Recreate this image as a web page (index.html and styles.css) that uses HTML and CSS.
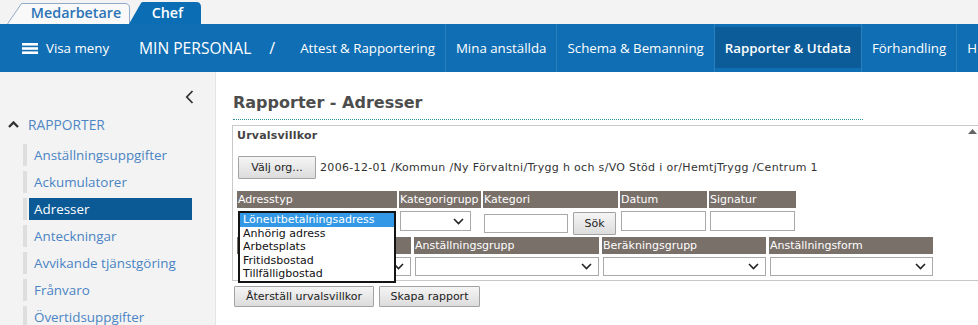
FILE: index.html
```html
<!DOCTYPE html>
<html lang="sv">
<head>
<meta charset="utf-8">
<title>Rapporter - Adresser</title>
<link rel="stylesheet" href="styles.css">
</head>
<body>
<div class="tabs">
  <div class="tab tab-emp">
    <svg class="tab-bg" width="124" height="22" viewBox="0 0 124 22"><path d="M0.5 22 L14.5 1.5 L118 1.5 Q122.5 1.5 122.5 6 L122.5 22" fill="#f9f9f9" stroke="#8fabc8" stroke-width="1"/></svg>
    <span class="tab-label">Medarbetare</span>
  </div>
  <div class="tab tab-chef">
    <svg class="tab-bg" width="72" height="22" viewBox="0 0 72 22"><path d="M0 22 L12 1 Q12.6 0 14 0 L67 0 Q72 0 72 5 L72 22 Z" fill="#0b6db3"/></svg>
    <span class="tab-label">Chef</span>
  </div>
</div>

<nav class="nav">
  <div class="nav-menu">
    <svg width="16" height="11" viewBox="0 0 16 11"><rect x="0" y="0" width="16" height="2.6" fill="#fff"/><rect x="0" y="4.2" width="16" height="2.6" fill="#fff"/><rect x="0" y="8.4" width="16" height="2.6" fill="#fff"/></svg>
    <span>Visa meny</span>
  </div>
  <div class="nav-title">MIN PERSONAL</div>
  <div class="nav-slash">/</div>
  <ul class="nav-items">
    <li><a>Attest &amp; Rapportering</a></li>
    <li><a>Mina anställda</a></li>
    <li><a>Schema &amp; Bemanning</a></li>
    <li class="active"><a>Rapporter &amp; Utdata</a></li>
    <li><a>Förhandling</a></li>
    <li><a>H</a></li>
  </ul>
</nav>

<div class="layout">
  <aside class="sidebar">
    <div class="collapse">
      <svg width="9" height="14" viewBox="0 0 9 14"><path d="M7.5 1 L1.8 7 L7.5 13" fill="none" stroke="#333" stroke-width="1.8"/></svg>
    </div>
    <div class="section">
      <svg width="11" height="7" viewBox="0 0 11 7"><path d="M1 6 L5.5 1.5 L10 6" fill="none" stroke="#333" stroke-width="2.4"/></svg>
      <span>RAPPORTER</span>
    </div>
    <ul class="side-list">
      <li><a>Anställningsuppgifter</a></li>
      <li><a>Ackumulatorer</a></li>
      <li class="active"><a>Adresser</a></li>
      <li><a>Anteckningar</a></li>
      <li><a>Avvikande tjänstgöring</a></li>
      <li><a>Frånvaro</a></li>
      <li><a>Övertidsuppgifter</a></li>
    </ul>
  </aside>

  <main class="main">
    <h1 class="title">Rapporter - Adresser</h1>
    <section class="panel">
      <div class="panel-head">
        <span>Urvalsvillkor</span>
        <svg width="9" height="5" viewBox="0 0 9 5"><path d="M0 5 L4.5 0 L9 5 Z" fill="#666"/></svg>
      </div>
      <div class="org-row">
        <button class="btn btn-org">Välj org...</button>
        <span class="org-text">2006-12-01 /Kommun /Ny Förvaltni/Trygg h och s/VO Stöd i or/HemtjTrygg /Centrum 1</span>
      </div>

      <div class="grid grid-1">
        <div class="hd">Adresstyp</div>
        <div class="hd">Kategorigrupp</div>
        <div class="hd">Kategori</div>
        <div class="hd">Datum</div>
        <div class="hd">Signatur</div>

        <div class="cell cell-dd">
          <div class="select sel-adress"><span></span><svg width="11" height="7" viewBox="0 0 11 7"><path d="M1 1 L5.5 5.5 L10 1" fill="none" stroke="#222" stroke-width="1.6"/></svg></div>
          <ul class="listbox">
            <li class="sel">Löneutbetalningsadress</li>
            <li>Anhörig adress</li>
            <li>Arbetsplats</li>
            <li>Fritidsbostad</li>
            <li>Tillfälligbostad</li>
          </ul>
        </div>
        <div class="cell">
          <div class="select sel-kat"><span></span><svg width="11" height="7" viewBox="0 0 11 7"><path d="M1 1 L5.5 5.5 L10 1" fill="none" stroke="#222" stroke-width="1.6"/></svg></div>
        </div>
        <div class="cell cell-kategori">
          <div class="input in-kat"></div>
          <button class="btn btn-sok">Sök</button>
        </div>
        <div class="cell"><div class="input in-date"></div></div>
        <div class="cell"><div class="input in-date"></div></div>
      </div>

      <div class="grid grid-2">
        <div class="hd"></div>
        <div class="hd">Anställningsgrupp</div>
        <div class="hd">Beräkningsgrupp</div>
        <div class="hd">Anställningsform</div>

        <div class="cell"><div class="select sel-wide"><span></span><svg width="11" height="7" viewBox="0 0 11 7"><path d="M1 1 L5.5 5.5 L10 1" fill="none" stroke="#222" stroke-width="1.6"/></svg></div></div>
        <div class="cell"><div class="select sel-wide"><span></span><svg width="11" height="7" viewBox="0 0 11 7"><path d="M1 1 L5.5 5.5 L10 1" fill="none" stroke="#222" stroke-width="1.6"/></svg></div></div>
        <div class="cell"><div class="select sel-wide"><span></span><svg width="11" height="7" viewBox="0 0 11 7"><path d="M1 1 L5.5 5.5 L10 1" fill="none" stroke="#222" stroke-width="1.6"/></svg></div></div>
        <div class="cell"><div class="select sel-wide"><span></span><svg width="11" height="7" viewBox="0 0 11 7"><path d="M1 1 L5.5 5.5 L10 1" fill="none" stroke="#222" stroke-width="1.6"/></svg></div></div>
      </div>
    </section>
    <div class="actions">
      <button class="btn btn-reset">Återställ urvalsvillkor</button>
      <button class="btn btn-create">Skapa rapport</button>
    </div>
  </main>
</div>
</body>
</html>
```

FILE: styles.css
```css
* { box-sizing: border-box; }
html, body { margin: 0; padding: 0; }
body {
  width: 978px;
  height: 325px;
  overflow: hidden;
  background: #fff;
  font-family: "Open Sans", "Noto Sans", sans-serif;
}
ul { list-style: none; margin: 0; padding: 0; }

/* top tabs */
.tabs {
  height: 24px;
  background: #f3f3f3;
  display: flex;
  align-items: flex-end;
  padding-left: 7px;
}
.tab {
  position: relative;
  height: 22px;
  display: flex;
  align-items: center;
  justify-content: center;
  font-size: 14.3px;
  font-weight: 600;
}
.tab-bg { position: absolute; left: 0; top: 0; }
.tab-label { position: relative; line-height: 22px; }
.tab-emp { width: 124px; padding-left: 14px; color: #2a73b6; }
.tab-chef { width: 72px; margin-left: -2px; padding-left: 5px; color: #fff; }

/* nav bar */
.nav {
  height: 48px;
  background: #0f6eb4;
  display: flex;
  align-items: stretch;
  color: #fff;
  white-space: nowrap;
  overflow: hidden;
}
.nav-menu {
  display: flex;
  align-items: center;
  gap: 8px;
  padding-left: 22px;
  font-size: 13.3px;
}
.nav-title {
  display: flex;
  align-items: center;
  margin-left: 30px;
  font-size: 15.6px;
}
.nav-slash {
  display: flex;
  align-items: center;
  margin-left: 18px;
  margin-right: 15px;
  font-size: 16px;
}
.nav-items { display: flex; align-items: stretch; }
.nav-items li {
  display: flex;
  padding: 3px 0 4px;
  border-right: 1px solid #2b7fbd;
}
.nav-items a {
  display: flex;
  align-items: center;
  padding: 0 10px;
  font-size: 13.3px;
}
.nav-items .active a {
  background: #0b5c99;
  font-weight: 600;
}

/* layout */
.layout { display: flex; height: 253px; }
.sidebar {
  width: 216px;
  flex: none;
  background: #f3f3f3;
  border-right: 1px solid #e4e4e4;
  overflow: hidden;
}
.collapse {
  height: 40px;
  display: flex;
  justify-content: flex-end;
  align-items: center;
  padding-right: 21px;
  padding-top: 10px;
}
.section {
  display: flex;
  align-items: center;
  gap: 9px;
  padding-left: 8px;
  height: 26px;
  margin-top: -1px;
  font-size: 13.8px;
  color: #4f87c5;
}
.side-list { margin-top: 7px; }
.side-list li {
  margin-left: 23px;
  height: 22px;
  margin-bottom: 5px;
  border-left: 4px solid #dedede;
  padding-left: 2px;
  width: 169px;
}
.side-list a {
  display: flex;
  align-items: center;
  height: 22px;
  padding-left: 5px;
  font-size: 13.4px;
  color: #4a84c4;
}
.side-list .active a { background: #0b5a96; color: #fff; }

/* main */
.main {
  flex: 1;
  min-width: 0;
  padding-left: 16px;
  font-family: "DejaVu Sans", Verdana, sans-serif;
  font-size: 11px;
  color: #333;
}
.title {
  margin: 0 0 0 1px;
  width: 630px;
  padding-top: 21px;
  padding-bottom: 6px;
  line-height: 20px;
  font-size: 16px;
  font-weight: bold;
  color: #4d4d4d;
  border-bottom: 1px dotted #2f8e9c;
}
.panel {
  margin-top: 5px;
  margin-right: -4px;
  height: 156px;
  border: 1px solid #c9c9c9;
  padding-left: 4px;
}
.panel-head {
  display: flex;
  justify-content: space-between;
  align-items: flex-start;
  padding: 3px 4px 0 0;
  height: 17px;
  line-height: 14px;
  font-weight: bold;
  color: #444;
  letter-spacing: 0.2px;
}
.org-row {
  display: flex;
  align-items: center;
  margin-top: 13px;
  padding-left: 1px;
  gap: 4px;
}
.btn {
  font-family: "DejaVu Sans", Verdana, sans-serif;
  font-size: 11px;
  color: #222;
  background: linear-gradient(#f5f5f5, #dcdcdc);
  border: 1px solid #a3a3a3;
  padding: 0;
  margin: 0;
  border-radius: 1px;
}
.btn-org { width: 78px; height: 23px; }
.org-text { color: #333; letter-spacing: 0.32px; }

.grid { display: grid; }
.grid-1 {
  margin-top: 12px;
  grid-template-columns: 160px 82px 135px 87px 87px;
  column-gap: 2px;
  grid-template-rows: 17px 29px;
}
.grid-2 {
  grid-template-columns: 174px 185px 164px 164px;
  column-gap: 3px;
  grid-template-rows: 17px 25px;
}
.hd {
  background: #7a706a;
  color: #fff;
  padding-left: 1px;
  line-height: 17px;
  white-space: nowrap;
  overflow: hidden;
}
.cell { display: flex; align-items: flex-start; padding-top: 3px; }
.cell-dd { position: relative; }
.select {
  display: flex;
  align-items: center;
  justify-content: space-between;
  height: 20px;
  background: #fff;
  border: 1px solid #a9a9a9;
  padding-right: 6px;
}
.sel-adress { width: 158px; margin-left: 1px; }
.sel-kat { width: 71px; margin-left: 1px; }
.sel-wide { width: 100%; height: 19px; margin-left: 1px; }
.grid-2 .cell:first-child .sel-wide { margin-left: 0; }
.input {
  height: 20px;
  background: #fff;
  border: 1px solid #a9a9a9;
}
.cell-kategori { gap: 5px; align-items: center; padding-top: 1px; }
.in-kat { width: 84px; margin-left: 1px; height: 19px; margin-top: 1px; }
.btn-sok { width: 43px; height: 23px; }
.in-date { width: 85px; margin-left: 1px; }

.listbox {
  position: absolute;
  left: 1px;
  top: 3px;
  width: 158px;
  border: 2px solid #141414;
  background: #fff;
  z-index: 2;
  font-size: 11px;
  color: #111;
}
.listbox li { line-height: 13.6px; padding-left: 3px; white-space: nowrap; }
.listbox li.sel { background: #3399e6; color: #fff; }

.actions {
  display: flex;
  gap: 5px;
  margin-top: 5px;
  margin-left: 2px;
}
.btn-reset { width: 140px; height: 21px; }
.btn-create { width: 101px; height: 21px; }
```
